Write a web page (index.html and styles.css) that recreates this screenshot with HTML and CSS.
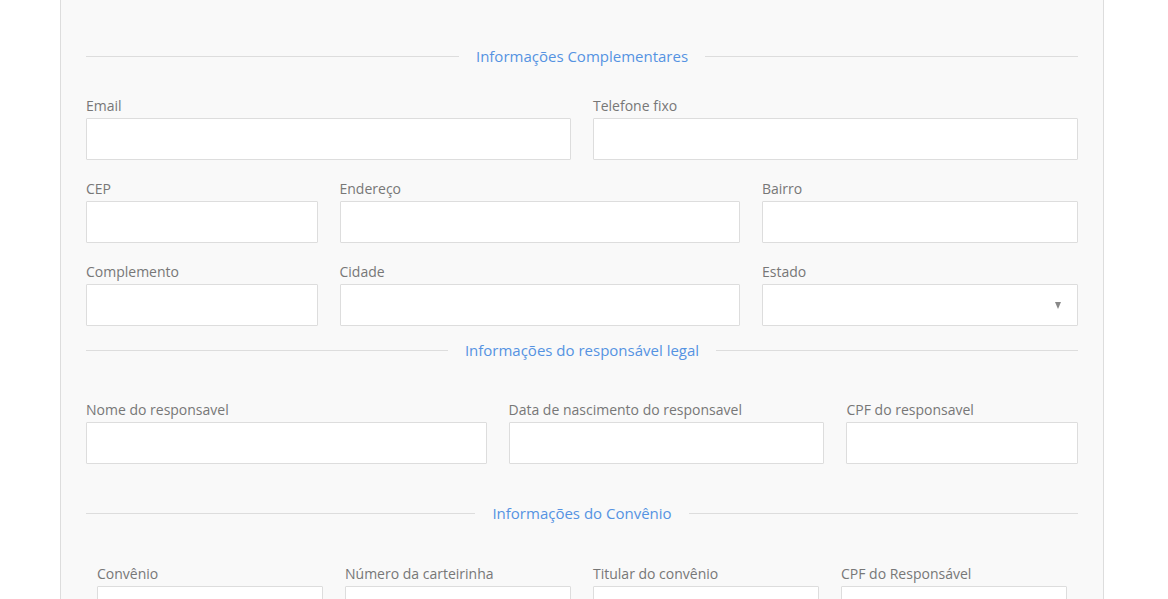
FILE: index.html
```html
<!DOCTYPE html>
<html lang="pt-BR">
<head>
<meta charset="utf-8">
<title>Cadastro</title>
<link rel="stylesheet" href="styles.css">
</head>
<body>
<div class="panel">
  <div class="section-title first"><span>Informações Complementares</span></div>

  <div class="row">
    <div class="field col-6"><label>Email</label><input type="text"></div>
    <div class="field col-6"><label>Telefone fixo</label><input type="text"></div>
  </div>
  <div class="row">
    <div class="field col-3"><label>CEP</label><input type="text"></div>
    <div class="field col-5"><label>Endereço</label><input type="text"></div>
    <div class="field col-4"><label>Bairro</label><input type="text"></div>
  </div>
  <div class="row last">
    <div class="field col-3"><label>Complemento</label><input type="text"></div>
    <div class="field col-5"><label>Cidade</label><input type="text"></div>
    <div class="field col-4"><label>Estado</label><div class="select"><span class="caret"></span></div></div>
  </div>

  <div class="section-title"><span>Informações do responsável legal</span></div>

  <div class="row last">
    <div class="field col-5"><label>Nome do responsavel</label><input type="text"></div>
    <div class="field col-4"><label>Data de nascimento do responsavel</label><input type="text"></div>
    <div class="field col-3"><label>CPF do responsavel</label><input type="text"></div>
  </div>

  <div class="section-title spaced"><span>Informações do Convênio</span></div>

  <div class="nested">
    <div class="row">
      <div class="field col-3"><label>Convênio</label><input type="text"></div>
      <div class="field col-3"><label>Número da carteirinha</label><input type="text"></div>
      <div class="field col-3"><label>Titular do convênio</label><input type="text"></div>
      <div class="field col-3"><label>CPF do Responsável</label><input type="text"></div>
    </div>
  </div>
</div>
</body>
</html>
```

FILE: styles.css
```css
html, body {
  margin: 0;
  padding: 0;
  background: #ffffff;
  font-family: "Open Sans", "Liberation Sans", sans-serif;
  font-size: 14px;
  color: #777777;
  overflow: hidden;
}

.panel {
  margin-left: 60px;
  width: 1044px;
  box-sizing: border-box;
  background: #f9f9f9;
  border: 1px solid #dddddd;
  border-top: none;
  padding: 46px 25px 40px 25px;
  min-height: 700px;
}

.section-title {
  display: flex;
  align-items: center;
  gap: 17px;
  height: 20px;
  line-height: 20px;
  font-size: 15px;
  color: #5593e2;
  margin-bottom: 40px;
}
.section-title.first {
  margin-bottom: 30px;
}
.section-title.spaced {
  margin-top: 39px;
  margin-bottom: 41px;
}
.section-title::before,
.section-title::after {
  content: "";
  flex: 1;
  height: 1px;
  background: #dddddd;
}

.row {
  display: flex;
  margin: 0 -11px 19px -11px;
}
.row.last {
  margin-bottom: 14px;
}

.nested {
  padding: 0 11px;
}

.field {
  box-sizing: border-box;
  padding: 0 11px;
  display: flex;
  flex-direction: column;
}
.col-3 { width: 25%; }
.col-4 { width: 33.3333%; }
.col-5 { width: 41.6667%; }
.col-6 { width: 50%; }

.field label {
  display: block;
  line-height: 20px;
  height: 20px;
  margin-bottom: 2px;
  color: #777777;
  white-space: nowrap;
}

.field input,
.select {
  display: block;
  box-sizing: border-box;
  width: 100%;
  height: 42px;
  margin: 0;
  border: 1px solid #dddddd;
  border-radius: 1px;
  background: #ffffff;
  font: inherit;
  padding: 0 12px;
  outline: none;
}

.select {
  position: relative;
}
.caret {
  position: absolute;
  right: 16px;
  top: 17px;
  width: 0;
  height: 0;
  border-left: 3.5px solid transparent;
  border-right: 3.5px solid transparent;
  border-top: 7px solid #888888;
}
```
